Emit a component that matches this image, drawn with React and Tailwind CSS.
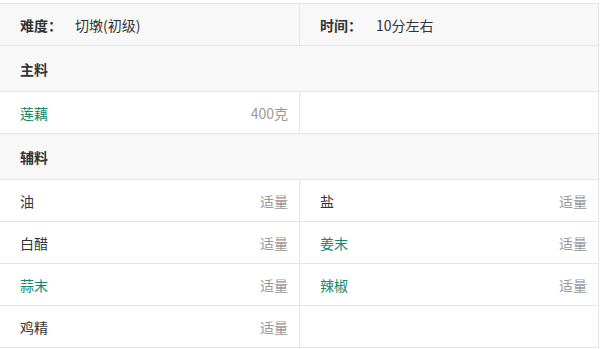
import React from 'react';

const font = { fontFamily: '"Microsoft YaHei", "Noto Sans CJK SC", "Liberation Sans", sans-serif' };

// 主料 / 辅料 data
const mainItems = [[{ name: '莲藕', amount: '400克', link: true }, null]];

const subItems = [
  [{ name: '油', amount: '适量' }, { name: '盐', amount: '适量' }],
  [{ name: '白醋', amount: '适量' }, { name: '姜末', amount: '适量', link: true }],
  [{ name: '蒜末', amount: '适量', link: true }, { name: '辣椒', amount: '适量', link: true }],
  [{ name: '鸡精', amount: '适量' }, null],
];

function Cell({ item, left }) {
  return (
    <div
      className={`flex items-center justify-between h-[42px] pl-[20px] pr-[11px] border-b border-[#e5e5e5] ${
        left ? 'w-[300px] border-r' : 'flex-1'
      }`}
    >
      {item && (
        <>
          <span className={item.link ? 'text-[#12876f]' : 'text-[#333]'}>{item.name}</span>
          <span className="text-[#999]">{item.amount}</span>
        </>
      )}
    </div>
  );
}

function Section({ title, rows }) {
  return (
    <>
      <div className="flex items-center h-[46px] pl-[20px] bg-[#f8f8f8] border-b border-[#e5e5e5] font-bold text-[#333]">
        {title}
      </div>
      {rows.map((r, i) => (
        <div key={i} className="flex">
          <Cell item={r[0]} left />
          <Cell item={r[1]} />
        </div>
      ))}
    </>
  );
}

export default function App() {
  return (
    <div className="w-[601px] h-[349px] bg-white pt-[3px] text-[14px] leading-none" style={font}>
      <div className="w-[599px] border-t border-r border-[#e5e5e5]">
        {/* 难度 / 时间 */}
        <div className="flex bg-[#f8f8f8]">
          <div className="flex items-center w-[300px] h-[42px] pl-[20px] border-r border-b border-[#e5e5e5]">
            <span className="font-bold text-[#333]">难度：</span>
            <span className="ml-[13px] text-[#333]">切墩(初级)</span>
          </div>
          <div className="flex items-center flex-1 h-[42px] pl-[20px] border-b border-[#e5e5e5]">
            <span className="font-bold text-[#333]">时间：</span>
            <span className="ml-[14px] text-[#333]">10分左右</span>
          </div>
        </div>
        <Section title="主料" rows={mainItems} />
        <Section title="辅料" rows={subItems} />
      </div>
    </div>
  );
}
